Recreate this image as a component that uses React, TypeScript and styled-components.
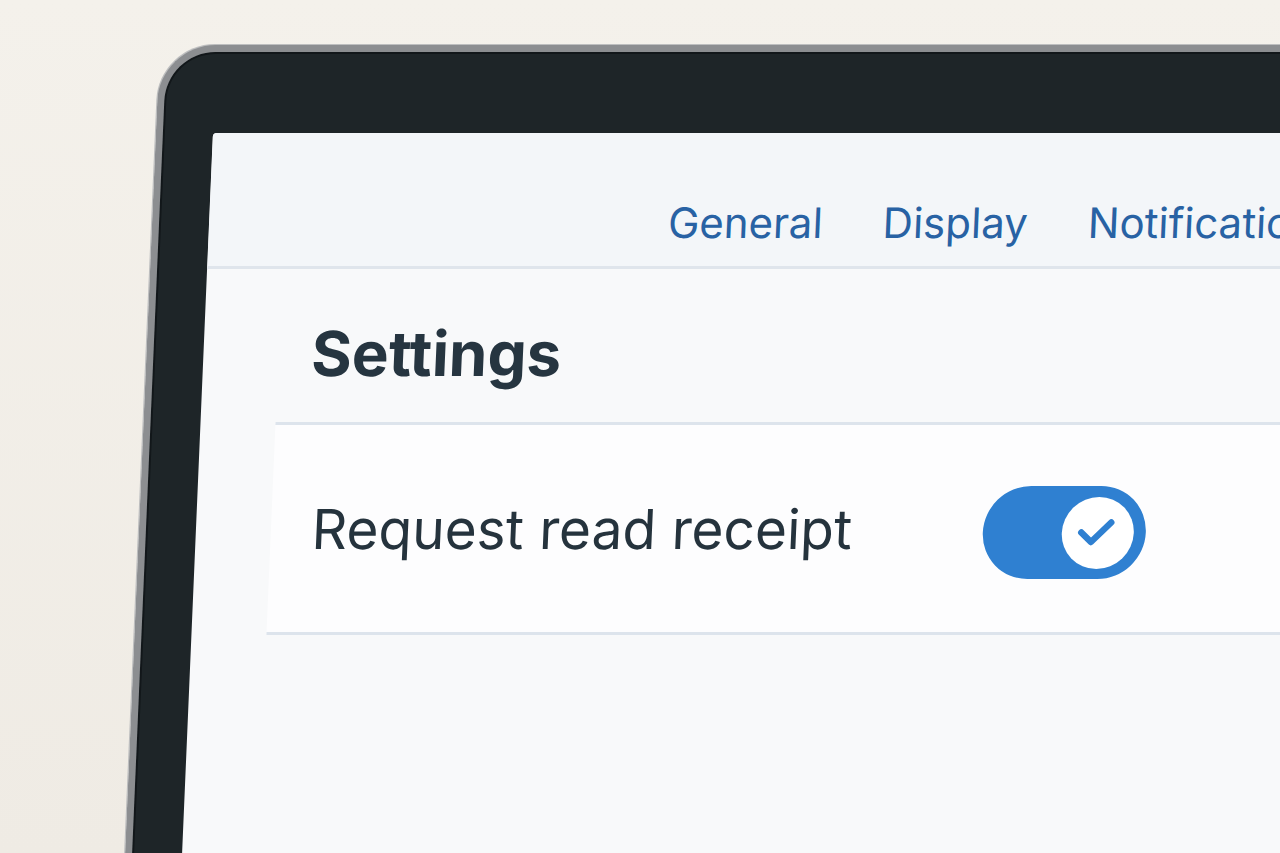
import React from 'react';
import styled, { createGlobalStyle } from 'styled-components';

const GlobalStyle = createGlobalStyle`
  html, body {
    margin: 0;
    padding: 0;
    background: #f2eee8;
  }
  body {
    font-family: Inter, "Noto Sans", sans-serif;
  }
`

const Stage = styled.div`
  width: 1280px;
  height: 853px;
  overflow: hidden;
  background: linear-gradient(180deg, #f4f1eb 0%, #efebe4 100%);
  padding: 45px 0 0 139px;
  box-sizing: border-box;
`

const Laptop = styled.div`
  width: 1240px;
  height: 900px;
  box-sizing: border-box;
  border: 7px solid #8c8e91;
  border-right: none;
  border-bottom: none;
  border-top-left-radius: 56px;
  background: #1e2528;
  box-shadow: inset 0 0 0 2px #12171a, -1px -1px 0 #bdbebf;
  padding: 81px 0 0 50px;
  transform: skewX(-2.45deg);
  transform-origin: 0 483px;
`

const Screen = styled.div`
  height: 100%;
  background: #f8f9fa;
  border-top-left-radius: 4px;
  overflow: hidden;
`

const Header = styled.header`
  height: 136px;
  box-sizing: border-box;
  display: flex;
  align-items: center;
  gap: 60px;
  padding: 46px 0 0 459px;
  background: #f3f6f9;
  border-bottom: 3px solid #dfe5ec;
`

const NavLink = styled.a`
  font-size: 42px;
  font-weight: 400;
  color: #2862a4;
  white-space: nowrap;
  text-decoration: none;
`

const Title = styled.h1`
  margin: 0;
  height: 153px;
  box-sizing: border-box;
  padding: 49px 0 0 108px;
  font-size: 62px;
  font-weight: 700;
  color: #263540;
  line-height: 72px;
`

const Row = styled.div`
  margin-left: 75px;
  height: 213px;
  box-sizing: border-box;
  display: flex;
  align-items: center;
  padding-left: 41px;
  background: #fdfdfe;
  border-top: 3px solid #dde4ec;
  border-bottom: 3px solid #dde4ec;
`

const Label = styled.span`
  font-size: 55px;
  color: #25333d;
  width: 671px;
  white-space: nowrap;
`

const Toggle = styled.div<{ $on: boolean }>`
  width: 163px;
  height: 93px;
  margin-top: 8px;
  border-radius: 47px;
  background: ${p => (p.$on ? '#2f80d1' : '#c7ced6')};
  display: flex;
  align-items: center;
  justify-content: ${p => (p.$on ? 'flex-end' : 'flex-start')};
  padding: 0 12px;
  box-sizing: border-box;
`

const Knob = styled.div`
  width: 72px;
  height: 72px;
  border-radius: 50%;
  background: #ffffff;
  display: flex;
  align-items: center;
  justify-content: center;
`

function Check() {
  return (
    <svg width="48" height="48" viewBox="0 0 48 48">
      <path d="M7.5 23.5 L17.5 33 L37 13.5" fill="none" stroke="#2f80d1" strokeWidth="6.5" strokeLinecap="round" strokeLinejoin="round" />
    </svg>
  );
}

export default function App() {
  return (
    <Stage>
      <GlobalStyle />
      <Laptop>
        <Screen>
          <Header>
            <NavLink>General</NavLink>
            <NavLink>Display</NavLink>
            <NavLink>Notifications</NavLink>
          </Header>
          <Title>Settings</Title>
          <Row>
            <Label>Request read receipt</Label>
            <Toggle $on>
              <Knob>
                <Check />
              </Knob>
            </Toggle>
          </Row>
        </Screen>
      </Laptop>
    </Stage>
  );
}
